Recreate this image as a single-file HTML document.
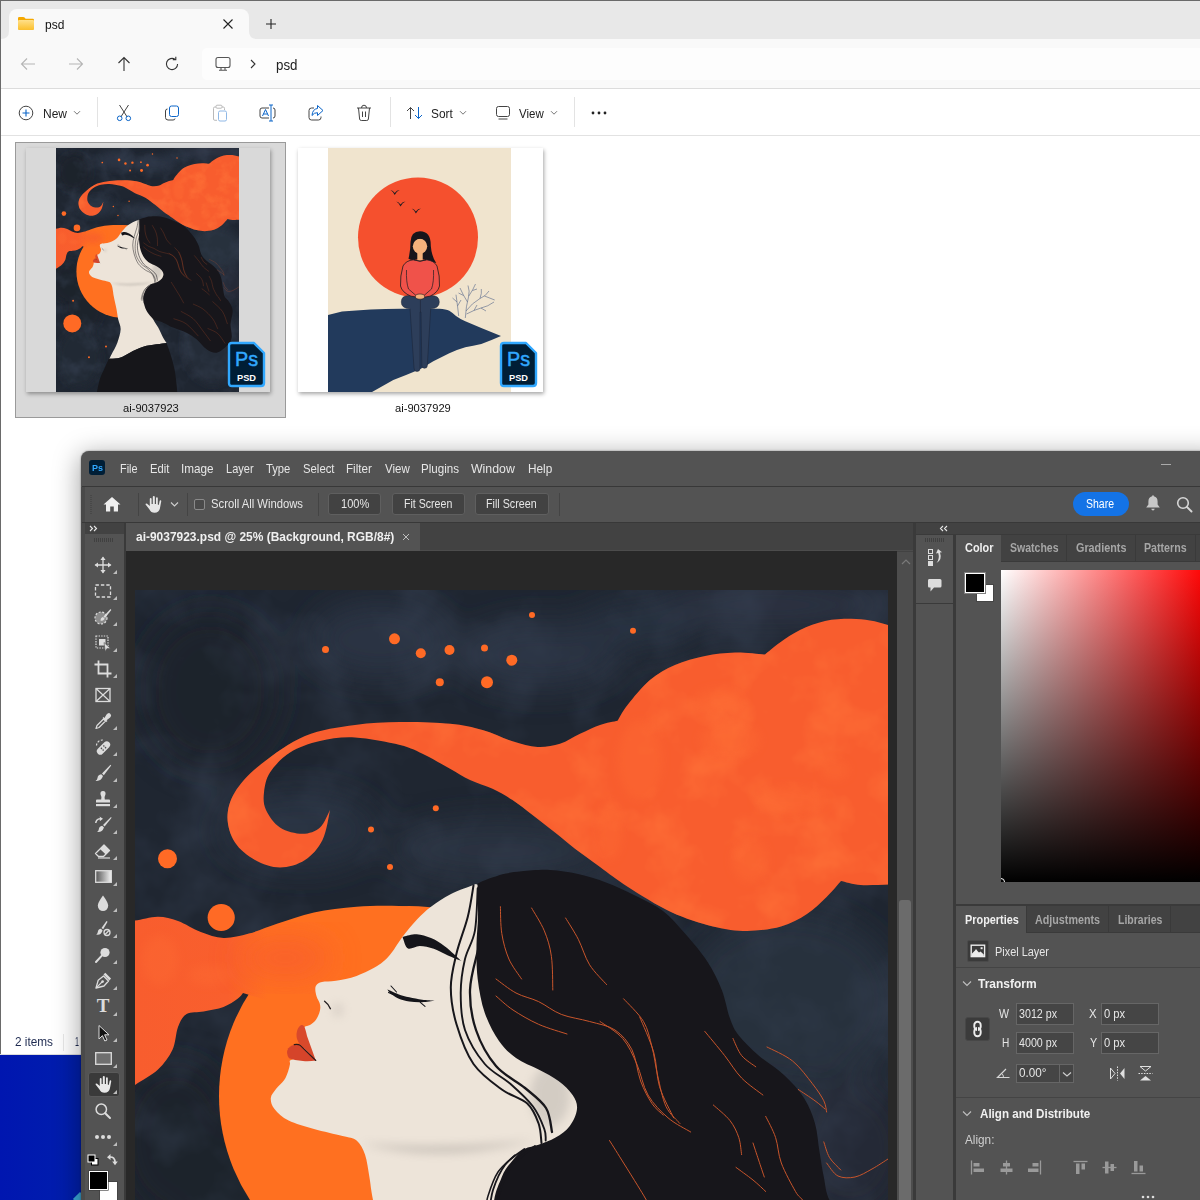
<!DOCTYPE html>
<html><head><meta charset="utf-8"><title>psd</title><style>html,body{margin:0;padding:0;background:#fff;}
#root{position:relative;width:1200px;height:1200px;overflow:hidden;font-family:"Liberation Sans",sans-serif;}
.t{position:absolute;white-space:nowrap;transform-origin:0 50%;}
svg{overflow:visible;display:block}</style></head><body><div id="root">
<div style="position:absolute;left:0;top:1055px;width:90px;height:145px;background:linear-gradient(90deg,#0016b0,#001cae 60%,#0020a8);"></div>
<div style="position:absolute;left:75px;top:1194px;width:10px;height:10px;background:#3aa7d6;transform:rotate(45deg);"></div>
<div style="position:absolute;left:0;top:0;width:1200px;height:1055px;background:#fff;"></div>
<div style="position:absolute;left:1px;top:1px;width:1199px;height:38px;background:#e8e8e8;"></div>
<div style="position:absolute;left:9px;top:9px;width:240px;height:30px;background:#f9f9f9;border-radius:8px 8px 0 0;"></div>
<svg style="position:absolute;left:1px;top:31px" width="260" height="8"><path d="M0,8 Q8,8 8,0 V8Z M248,0 Q248,8 256,8 H248Z" fill="#f9f9f9"/></svg>
<div style="position:absolute;left:1px;top:39px;width:1199px;height:49px;background:#f9f9f9;"></div>
<div style="position:absolute;left:1px;top:88px;width:1199px;height:1px;background:#dcdcdc;"></div>
<div style="position:absolute;left:202px;top:48px;width:1010px;height:32px;background:#fdfdfd;border-radius:5px;"></div>
<div style="position:absolute;left:1px;top:135px;width:1199px;height:1px;background:#e2e2e2;"></div>
<div style="position:absolute;left:0;top:0;width:1200px;height:1px;background:#6a6a6a;"></div>
<div style="position:absolute;left:0;top:0;width:1px;height:1055px;background:#6a6a6a;"></div>
<div style="position:absolute;left:0;top:1054px;width:90px;height:1px;background:#dcdcdc;"></div>
<svg style="position:absolute;left:17px;top:16px" width="18" height="15" viewBox="0 0 18 15">
<defs><linearGradient id="fg1" x1="0" y1="0" x2="0" y2="1"><stop offset="0" stop-color="#ffe08a"/><stop offset="1" stop-color="#fbc02d"/></linearGradient></defs>
<path d="M1,2.2 Q1,1 2.2,1 H6.2 Q7,1 7.6,1.6 L8.6,2.8 H15.8 Q17,2.8 17,4 V12.6 Q17,13.8 15.8,13.8 H2.2 Q1,13.8 1,12.6Z" fill="#f5a800"/>
<path d="M1,5 Q1,4 2.2,4 H15.8 Q17,4 17,5 V12.6 Q17,13.8 15.8,13.8 H2.2 Q1,13.8 1,12.6Z" fill="url(#fg1)"/></svg>
<div class="t" style="left:44.50px;top:15.50px;height:18px;line-height:18px;font-size:12.50px;color:#111;transform:scaleX(0.9576);">psd</div>
<svg style="position:absolute;left:222px;top:18px" width="12" height="12"><path d="M1.5,1.5 L10.5,10.5 M10.5,1.5 L1.5,10.5" stroke="#222" stroke-width="1.1" fill="none"/></svg>
<svg style="position:absolute;left:265px;top:18px" width="12" height="12"><path d="M6,1 V11 M1,6 H11" stroke="#222" stroke-width="1.1" fill="none"/></svg>
<svg style="position:absolute;left:20px;top:57px" width="16" height="14"><path d="M15,7 H1.5 M7,1.5 L1.5,7 L7,12.5" stroke="#b5b5b5" stroke-width="1.1" fill="none"/></svg>
<svg style="position:absolute;left:68px;top:57px" width="16" height="14"><path d="M1,7 H14.5 M9,1.5 L14.5,7 L9,12.5" stroke="#b5b5b5" stroke-width="1.1" fill="none"/></svg>
<svg style="position:absolute;left:117px;top:56px" width="14" height="16"><path d="M7,15 V1.5 M1.5,7 L7,1.5 L12.5,7" stroke="#333" stroke-width="1.1" fill="none"/></svg>
<svg style="position:absolute;left:164px;top:56px" width="16" height="16"><path d="M13.6,8 A5.6,5.6 0 1 1 11.2,3.4" stroke="#333" stroke-width="1.1" fill="none"/><path d="M8.8,3.6 H11.8 V0.8" stroke="#333" stroke-width="1.1" fill="none"/></svg>
<svg style="position:absolute;left:215px;top:56px" width="16" height="16"><rect x="1" y="1.5" width="14" height="10" rx="2" stroke="#555" stroke-width="1.1" fill="none"/><path d="M6,11.5 V14 M10,11.5 V14 M4,14.3 H12" stroke="#555" stroke-width="1.1" fill="none"/></svg>
<svg style="position:absolute;left:249px;top:59px" width="8" height="10"><path d="M2,1 L6,5 L2,9" stroke="#333" stroke-width="1.1" fill="none"/></svg>
<div class="t" style="left:275.50px;top:55.00px;height:20px;line-height:20px;font-size:14.00px;color:#222;transform:scaleX(0.9525);">psd</div>
<svg style="position:absolute;left:18px;top:105px" width="16" height="16"><circle cx="8" cy="8" r="6.8" stroke="#444" stroke-width="1" fill="none"/><path d="M8,4.5 V11.5 M4.5,8 H11.5" stroke="#0a64c8" stroke-width="1.1"/></svg>
<div class="t" style="left:43.00px;top:104.50px;height:18px;line-height:18px;font-size:12.50px;color:#222;transform:scaleX(0.9597);">New</div>
<svg style="position:absolute;left:73px;top:110px" width="8" height="6"><path d="M1,1.2 L4,4.2 L7,1.2" stroke="#777" stroke-width="1" fill="none"/></svg>
<div style="position:absolute;left:97px;top:97px;width:1px;height:30px;background:#e3e3e3;"></div>
<svg style="position:absolute;left:116px;top:104px" width="16" height="18"><path d="M3.5,1 L11.2,13 M12.5,1 L4.8,13" stroke="#444" stroke-width="1" fill="none"/><circle cx="3.7" cy="14.3" r="2.3" stroke="#0a64c8" stroke-width="1" fill="none"/><circle cx="12.3" cy="14.3" r="2.3" stroke="#0a64c8" stroke-width="1" fill="none"/></svg>
<svg style="position:absolute;left:164px;top:105px" width="16" height="16"><rect x="5.5" y="1" width="9" height="10.5" rx="2" stroke="#0a64c8" stroke-width="1" fill="none"/><path d="M3.5,4 Q1.5,4 1.5,6 V12.5 Q1.5,15 4,15 H9 Q11,15 11,13.5" stroke="#444" stroke-width="1" fill="none"/></svg>
<svg style="position:absolute;left:212px;top:104px" width="16" height="18" opacity=".45"><path d="M4,3 H2.8 Q1.5,3 1.5,4.3 V15 Q1.5,16.3 2.8,16.3 H5 M10,3 H11.2 Q12.5,3 12.5,4.3 V6" stroke="#666" stroke-width="1" fill="none"/><rect x="4" y="1.2" width="6" height="3" rx="1" stroke="#666" stroke-width="1" fill="none"/><rect x="6.5" y="7" width="8" height="10" rx="1.5" stroke="#0a64c8" stroke-width="1" fill="none"/></svg>
<svg style="position:absolute;left:258px;top:104px" width="19" height="18"><path d="M11,4 H4 Q2,4 2,6 V12 Q2,14 4,14 H11 M15,4 Q17,4 17,6 V12 Q17,14 15,14" stroke="#444" stroke-width="1" fill="none"/><path d="M13,1 V17 M11,1 H15 M11,17 H15" stroke="#0a64c8" stroke-width="1" fill="none"/><path d="M4.5,12 L7.5,5.5 L10.5,12 M5.5,10 H9.5" stroke="#0a64c8" stroke-width="1" fill="none"/></svg>
<svg style="position:absolute;left:307px;top:104px" width="18" height="18"><path d="M7,4 H4.5 Q2,4 2,6.5 V13.5 Q2,16 4.5,16 H11.5 Q14,16 14,13.5 V12.5" stroke="#444" stroke-width="1" fill="none"/><path d="M10.5,1.5 L16,6.5 L10.5,11.5 V8.7 Q7,8.5 5,11.5 Q5.5,5 10.5,4.5Z" stroke="#0a64c8" stroke-width="1" fill="none" stroke-linejoin="round"/></svg>
<svg style="position:absolute;left:356px;top:104px" width="16" height="18"><path d="M1,4 H15 M5.5,4 Q5.5,1.2 8,1.2 Q10.5,1.2 10.5,4 M2.5,4 L3.6,15 Q3.8,16.5 5.3,16.5 H10.7 Q12.2,16.5 12.4,15 L13.5,4 M6.5,7.5 V13 M9.5,7.5 V13" stroke="#444" stroke-width="1" fill="none"/></svg>
<div style="position:absolute;left:390px;top:97px;width:1px;height:30px;background:#e3e3e3;"></div>
<svg style="position:absolute;left:406px;top:106px" width="18" height="14"><path d="M4.5,13 V1.5 M1,5 L4.5,1.5 L8,5" stroke="#444" stroke-width="1" fill="none"/><path d="M12.5,1 V12.5 M9,9 L12.5,12.5 L16,9" stroke="#0a64c8" stroke-width="1" fill="none"/></svg>
<div class="t" style="left:431.20px;top:104.50px;height:18px;line-height:18px;font-size:12.50px;color:#222;transform:scaleX(0.9509);">Sort</div>
<svg style="position:absolute;left:459px;top:110px" width="8" height="6"><path d="M1,1.2 L4,4.2 L7,1.2" stroke="#777" stroke-width="1" fill="none"/></svg>
<svg style="position:absolute;left:495px;top:105px" width="16" height="16"><rect x="1.5" y="1.5" width="13" height="10" rx="2" stroke="#444" stroke-width="1" fill="none"/><path d="M3.5,14 H12.5" stroke="#444" stroke-width="1"/></svg>
<div class="t" style="left:519.30px;top:104.50px;height:18px;line-height:18px;font-size:12.50px;color:#222;transform:scaleX(0.9193);">View</div>
<svg style="position:absolute;left:550px;top:110px" width="8" height="6"><path d="M1,1.2 L4,4.2 L7,1.2" stroke="#777" stroke-width="1" fill="none"/></svg>
<div style="position:absolute;left:574px;top:97px;width:1px;height:30px;background:#e3e3e3;"></div>
<svg style="position:absolute;left:590px;top:110px" width="18" height="6"><circle cx="3" cy="3" r="1.4" fill="#222"/><circle cx="9" cy="3" r="1.4" fill="#222"/><circle cx="15" cy="3" r="1.4" fill="#222"/></svg>
<div style="position:absolute;left:15px;top:142px;width:271px;height:276px;background:#d9d9d9;border:1px solid #9a9a9a;box-sizing:border-box;"></div>
<div style="position:absolute;left:26px;top:148px;width:244px;height:244px;background:#d9d9d9;box-shadow:1px 2px 4px rgba(0,0,0,.35);"></div>
<div style="position:absolute;left:298px;top:148px;width:245px;height:244px;background:#fff;box-shadow:1px 2px 4px rgba(0,0,0,.35);"></div>
<div class="t" style="left:123.00px;top:399.50px;height:16px;line-height:16px;font-size:11.50px;color:#111;transform:scaleX(0.9695);">ai-9037923</div>
<div class="t" style="left:395.00px;top:399.50px;height:16px;line-height:16px;font-size:11.50px;color:#111;transform:scaleX(0.9695);">ai-9037929</div>
<div class="t" style="left:15.00px;top:1034.00px;height:17px;line-height:17px;font-size:12.00px;color:#1e2a50;transform:scaleX(0.9825);">2 items</div>
<div style="position:absolute;left:63px;top:1034px;width:1px;height:17px;background:#e8e8e8;"></div>
<div class="t" style="left:74.50px;top:1034.00px;height:17px;line-height:17px;font-size:12.00px;color:#1e2a50;transform:scaleX(0.5993);">1</div>
<svg width="0" height="0" style="position:absolute"><defs><filter id="blur18" x="-50%" y="-50%" width="200%" height="200%"><feGaussianBlur stdDeviation="16"/></filter><filter id="blur6" x="-50%" y="-50%" width="200%" height="200%"><feGaussianBlur stdDeviation="5"/></filter><filter id="texbg" x="0" y="0" width="100%" height="100%" color-interpolation-filters="sRGB"><feTurbulence type="fractalNoise" baseFrequency=".013" numOctaves="4" seed="7"/><feColorMatrix type="matrix" values="0 0 0 0 0.21  0 0 0 0 0.25  0 0 0 0 0.32  1.4 0 0 0 -0.62"/></filter><filter id="texor" x="0" y="0" width="100%" height="100%" color-interpolation-filters="sRGB"><feTurbulence type="fractalNoise" baseFrequency=".02" numOctaves="4" seed="11"/><feColorMatrix type="matrix" values="0 0 0 0 1  0 0 0 0 0.45  0 0 0 0 0.22  1.6 0 0 0 -0.72"/></filter><linearGradient id="blobg" gradientUnits="userSpaceOnUse" x1="135" y1="0" x2="400" y2="0"><stop offset="0" stop-color="#f85d2e"/><stop offset=".35" stop-color="#f95f2d"/><stop offset=".5" stop-color="#ff7020"/><stop offset="1" stop-color="#ff7020"/></linearGradient><symbol id="art" viewBox="135 590 753 1000" preserveAspectRatio="none">
<rect x="135" y="590" width="753" height="1000" fill="#1f2631"/>
<g filter="url(#blur18)" opacity=".75">
<ellipse cx="380" cy="640" rx="70" ry="40" fill="#2e3848"/>
<ellipse cx="300" cy="830" rx="80" ry="40" fill="#2c3544"/>
<ellipse cx="540" cy="655" rx="80" ry="35" fill="#2f3949"/>
<ellipse cx="500" cy="850" rx="110" ry="30" fill="#2d3747"/>
<ellipse cx="770" cy="605" rx="120" ry="22" fill="#30394a"/>
<ellipse cx="640" cy="625" rx="60" ry="25" fill="#2c3545"/>
<ellipse cx="790" cy="1000" rx="110" ry="90" fill="#2c3543"/>
<ellipse cx="850" cy="1150" rx="60" ry="70" fill="#252c39"/>
<ellipse cx="210" cy="690" rx="70" ry="80" fill="#1c222c"/>
<ellipse cx="175" cy="1140" rx="60" ry="80" fill="#1b212b"/>
<ellipse cx="250" cy="1230" rx="80" ry="120" fill="#1c222c"/>
<ellipse cx="780" cy="1400" rx="120" ry="160" fill="#262d3a"/>
<ellipse cx="230" cy="1450" rx="90" ry="120" fill="#222936"/>
</g>
<rect x="135" y="590" width="753" height="1000" filter="url(#texbg)"/>
<circle cx="167.5" cy="858.8" r="9.5" fill="#ff6a25"/>
<circle cx="325.5" cy="649.5" r="3.5" fill="#ff6a25"/>
<circle cx="394.5" cy="638.8" r="5.5" fill="#ff6a25"/>
<circle cx="420.8" cy="653.2" r="5.0" fill="#ff6a25"/>
<circle cx="371.0" cy="829.5" r="3.0" fill="#ff6a25"/>
<circle cx="390.0" cy="867.0" r="3.0" fill="#ff6a25"/>
<circle cx="532.0" cy="615.0" r="3.0" fill="#ff6a25"/>
<circle cx="633.0" cy="630.8" r="3.0" fill="#ff6a25"/>
<circle cx="449.5" cy="650.0" r="5.0" fill="#ff6a25"/>
<circle cx="484.5" cy="648.0" r="3.5" fill="#ff6a25"/>
<circle cx="511.8" cy="660.2" r="5.5" fill="#ff6a25"/>
<circle cx="439.8" cy="682.2" r="4.0" fill="#ff6a25"/>
<circle cx="487.0" cy="682.2" r="6.0" fill="#ff6a25"/>
<circle cx="435.8" cy="808.2" r="3.0" fill="#ff6a25"/>
<circle cx="221.2" cy="917.5" r="13.6" fill="#ff6a25"/>
<circle cx="202.0" cy="1309.0" r="37.0" fill="#ff6a25"/>
<circle cx="205.4" cy="1216.0" r="4.0" fill="#ff6a25"/>
<circle cx="340.7" cy="1403.8" r="4.0" fill="#ff6a25"/>
<circle cx="270.6" cy="1447.7" r="4.0" fill="#ff6a25"/>
<circle cx="409" cy="1096" r="190" fill="#ff7020"/>
<path d="M120.0,921.0C122.5,920.9 128.7,921.2 135.0,920.5C141.3,919.8 150.8,916.6 158.0,916.7C165.2,916.8 170.9,918.5 178.0,921.0C185.1,923.5 193.2,929.2 200.8,932.0C208.4,934.8 215.5,937.7 223.5,938.0C231.5,938.3 240.1,936.0 249.0,933.6C257.9,931.2 266.2,927.2 277.0,923.7C287.8,920.2 300.7,915.2 314.0,912.4C327.3,909.6 342.4,907.8 356.6,906.7C370.8,905.6 386.8,905.5 399.0,906.0C411.2,906.5 424.8,909.3 430.0,910.0L430,960 L300,1010 L243,993C242.1,994.0 240.8,996.5 237.6,998.8C234.3,1001.1 229.2,1004.9 223.5,1007.0C217.8,1009.1 209.8,1010.3 203.6,1011.5C197.4,1012.7 190.9,1011.4 186.6,1014.0C182.3,1016.6 180.3,1021.0 178.0,1027.0C175.7,1033.0 175.8,1042.7 172.5,1049.8C169.2,1056.9 164.2,1063.7 158.0,1069.6C151.8,1075.5 141.3,1080.8 135.0,1085.0C128.7,1089.2 122.5,1093.3 120.0,1095.0Z" fill="url(#blobg)"/>
<clipPath id="blobclip"><path d="M120.0,921.0C122.5,920.9 128.7,921.2 135.0,920.5C141.3,919.8 150.8,916.6 158.0,916.7C165.2,916.8 170.9,918.5 178.0,921.0C185.1,923.5 193.2,929.2 200.8,932.0C208.4,934.8 215.5,937.7 223.5,938.0C231.5,938.3 240.1,936.0 249.0,933.6C257.9,931.2 266.2,927.2 277.0,923.7C287.8,920.2 300.7,915.2 314.0,912.4C327.3,909.6 342.4,907.8 356.6,906.7C370.8,905.6 386.8,905.5 399.0,906.0C411.2,906.5 424.8,909.3 430.0,910.0L430,960 L300,1010 L243,993C242.1,994.0 240.8,996.5 237.6,998.8C234.3,1001.1 229.2,1004.9 223.5,1007.0C217.8,1009.1 209.8,1010.3 203.6,1011.5C197.4,1012.7 190.9,1011.4 186.6,1014.0C182.3,1016.6 180.3,1021.0 178.0,1027.0C175.7,1033.0 175.8,1042.7 172.5,1049.8C169.2,1056.9 164.2,1063.7 158.0,1069.6C151.8,1075.5 141.3,1080.8 135.0,1085.0C128.7,1089.2 122.5,1093.3 120.0,1095.0Z"/><circle cx="409" cy="1096" r="190"/></clipPath>
<g clip-path="url(#blobclip)"><g filter="url(#blur18)" opacity=".9"><ellipse cx="285" cy="958" rx="46" ry="18" fill="#f85d2e"/></g></g>
<path d="M330.0,810.0C328.8,815.0 326.7,831.7 322.5,840.0C318.3,848.3 312.1,855.4 305.0,860.0C297.9,864.6 288.3,867.5 280.0,867.5C271.7,867.5 262.5,864.2 255.0,860.0C247.5,855.8 239.6,849.6 235.0,842.5C230.4,835.4 227.5,825.9 227.5,817.5C227.5,809.1 229.6,800.8 235.0,792.0C240.4,783.2 248.3,774.3 260.0,765.0C271.7,755.7 289.2,742.7 305.0,736.0C320.8,729.3 339.2,727.3 355.0,725.0C370.8,722.7 384.2,722.2 400.0,722.0C415.8,721.8 436.2,722.5 450.0,723.8C463.8,725.1 472.1,727.1 482.5,730.0C492.9,732.9 503.3,738.4 512.5,741.2C521.7,744.0 529.6,746.6 537.5,747.0C545.4,747.4 552.9,746.0 560.0,743.8C567.1,741.6 573.3,736.9 580.0,733.8C586.7,730.7 593.8,727.2 600.0,725.0C606.2,722.8 614.6,721.5 617.5,720.8C619.2,718.2 622.1,711.8 627.5,705.0C632.9,698.2 642.1,686.7 650.0,680.0C657.9,673.3 665.8,669.0 675.0,665.0C684.2,661.0 695.0,658.1 705.0,656.0C715.0,653.9 725.0,652.8 735.0,652.5C745.0,652.2 760.0,654.2 765.0,654.5C767.5,652.5 774.2,646.6 780.0,642.5C785.8,638.4 792.5,633.6 800.0,630.0C807.5,626.4 816.7,622.9 825.0,621.0C833.3,619.1 842.5,618.9 850.0,618.8C857.5,618.7 863.7,619.5 870.0,620.5C876.3,621.5 882.2,623.2 888.0,625.0C893.8,626.8 902.2,630.0 905.0,631.0L905.0,884.0C902.2,884.1 895.4,884.3 888.0,884.5C880.6,884.7 868.4,885.6 860.6,885.0C852.8,884.4 844.3,881.7 841.0,881.0C838.6,883.7 832.3,891.5 826.6,897.0C820.9,902.5 814.6,909.1 807.0,914.0C799.4,918.9 791.0,923.7 781.0,926.5C771.0,929.3 758.3,931.0 747.0,931.0C735.7,931.0 725.7,929.7 713.0,926.5C700.3,923.3 685.2,918.6 671.0,912.0C656.8,905.4 639.8,894.5 628.0,887.0C616.2,879.5 608.8,873.4 600.0,867.0C591.2,860.6 582.5,854.5 575.0,848.8C567.5,843.0 562.1,838.1 555.0,832.5C547.9,826.9 539.6,820.4 532.5,815.0C525.4,809.6 519.2,804.4 512.5,800.0C505.8,795.6 499.6,792.1 492.5,788.8C485.4,785.5 477.1,783.3 470.0,780.0C462.9,776.7 457.5,773.0 450.0,768.8C442.5,764.6 433.3,759.0 425.0,755.0C416.7,751.0 411.7,747.9 400.0,745.0C388.3,742.1 368.3,738.2 355.0,737.5C341.7,736.8 330.8,738.5 320.0,741.0C309.2,743.5 298.3,747.2 290.0,752.5C281.7,757.8 274.3,765.8 270.0,772.5C265.7,779.2 264.7,786.2 264.0,792.5C263.3,798.8 263.3,804.2 266.0,810.0C268.7,815.8 273.9,823.5 280.0,827.5C286.1,831.5 295.8,833.8 302.5,833.8C309.2,833.8 315.4,831.5 320.0,827.5C324.6,823.5 328.3,812.9 330.0,810.0Z" fill="#f85d2e"/>
<clipPath id="cloudclip"><path d="M330.0,810.0C328.8,815.0 326.7,831.7 322.5,840.0C318.3,848.3 312.1,855.4 305.0,860.0C297.9,864.6 288.3,867.5 280.0,867.5C271.7,867.5 262.5,864.2 255.0,860.0C247.5,855.8 239.6,849.6 235.0,842.5C230.4,835.4 227.5,825.9 227.5,817.5C227.5,809.1 229.6,800.8 235.0,792.0C240.4,783.2 248.3,774.3 260.0,765.0C271.7,755.7 289.2,742.7 305.0,736.0C320.8,729.3 339.2,727.3 355.0,725.0C370.8,722.7 384.2,722.2 400.0,722.0C415.8,721.8 436.2,722.5 450.0,723.8C463.8,725.1 472.1,727.1 482.5,730.0C492.9,732.9 503.3,738.4 512.5,741.2C521.7,744.0 529.6,746.6 537.5,747.0C545.4,747.4 552.9,746.0 560.0,743.8C567.1,741.6 573.3,736.9 580.0,733.8C586.7,730.7 593.8,727.2 600.0,725.0C606.2,722.8 614.6,721.5 617.5,720.8C619.2,718.2 622.1,711.8 627.5,705.0C632.9,698.2 642.1,686.7 650.0,680.0C657.9,673.3 665.8,669.0 675.0,665.0C684.2,661.0 695.0,658.1 705.0,656.0C715.0,653.9 725.0,652.8 735.0,652.5C745.0,652.2 760.0,654.2 765.0,654.5C767.5,652.5 774.2,646.6 780.0,642.5C785.8,638.4 792.5,633.6 800.0,630.0C807.5,626.4 816.7,622.9 825.0,621.0C833.3,619.1 842.5,618.9 850.0,618.8C857.5,618.7 863.7,619.5 870.0,620.5C876.3,621.5 882.2,623.2 888.0,625.0C893.8,626.8 902.2,630.0 905.0,631.0L905.0,884.0C902.2,884.1 895.4,884.3 888.0,884.5C880.6,884.7 868.4,885.6 860.6,885.0C852.8,884.4 844.3,881.7 841.0,881.0C838.6,883.7 832.3,891.5 826.6,897.0C820.9,902.5 814.6,909.1 807.0,914.0C799.4,918.9 791.0,923.7 781.0,926.5C771.0,929.3 758.3,931.0 747.0,931.0C735.7,931.0 725.7,929.7 713.0,926.5C700.3,923.3 685.2,918.6 671.0,912.0C656.8,905.4 639.8,894.5 628.0,887.0C616.2,879.5 608.8,873.4 600.0,867.0C591.2,860.6 582.5,854.5 575.0,848.8C567.5,843.0 562.1,838.1 555.0,832.5C547.9,826.9 539.6,820.4 532.5,815.0C525.4,809.6 519.2,804.4 512.5,800.0C505.8,795.6 499.6,792.1 492.5,788.8C485.4,785.5 477.1,783.3 470.0,780.0C462.9,776.7 457.5,773.0 450.0,768.8C442.5,764.6 433.3,759.0 425.0,755.0C416.7,751.0 411.7,747.9 400.0,745.0C388.3,742.1 368.3,738.2 355.0,737.5C341.7,736.8 330.8,738.5 320.0,741.0C309.2,743.5 298.3,747.2 290.0,752.5C281.7,757.8 274.3,765.8 270.0,772.5C265.7,779.2 264.7,786.2 264.0,792.5C263.3,798.8 263.3,804.2 266.0,810.0C268.7,815.8 273.9,823.5 280.0,827.5C286.1,831.5 295.8,833.8 302.5,833.8C309.2,833.8 315.4,831.5 320.0,827.5C324.6,823.5 328.3,812.9 330.0,810.0Z"/></clipPath>
<g clip-path="url(#cloudclip)"><rect x="135" y="590" width="753" height="420" filter="url(#texor)"/></g>
<g filter="url(#blur6)" opacity=".3">
<ellipse cx="640" cy="760" rx="22" ry="40" fill="#ff6f35"/>
<ellipse cx="730" cy="740" rx="30" ry="18" fill="#ff6f35"/>
<ellipse cx="790" cy="800" rx="35" ry="14" fill="#ff6f35"/>
<ellipse cx="835" cy="770" rx="14" ry="10" fill="#ff6f35"/>
<ellipse cx="610" cy="830" rx="12" ry="30" fill="#ff6f35"/>
<ellipse cx="750" cy="860" rx="18" ry="22" fill="#ff6f35"/>
<ellipse cx="720" cy="700" rx="25" ry="12" fill="#ff6f35"/>
<ellipse cx="160" cy="960" rx="18" ry="25" fill="#ff6f35"/>
<ellipse cx="210" cy="975" rx="22" ry="10" fill="#ff6f35"/>
</g>
<path d="M476.0,884.0C471.8,885.7 458.5,890.2 451.0,894.0C443.5,897.8 436.7,902.5 431.0,906.7C425.3,911.0 421.7,914.5 417.0,919.5C412.3,924.5 407.0,930.8 402.7,936.5C398.4,942.2 394.9,948.8 391.0,953.5C387.1,958.2 384.7,961.0 379.0,964.8C373.3,968.5 363.8,973.3 356.6,976.0C349.4,978.7 341.8,979.8 336.0,980.8C330.2,981.8 325.2,981.3 322.0,982.0C318.8,982.7 317.6,983.8 316.5,985.0C315.4,986.2 315.3,987.5 315.3,989.5C315.3,991.5 316.0,994.5 316.7,996.7C317.4,999.0 319.0,1001.1 319.6,1003.0C320.2,1004.9 320.4,1006.3 320.3,1008.0C320.2,1009.7 319.9,1011.3 319.2,1013.3C318.4,1015.3 317.3,1018.0 315.8,1020.0C314.3,1022.0 311.9,1023.8 310.0,1025.0C308.1,1026.2 305.8,1025.5 304.6,1027.0C303.4,1028.5 302.8,1031.2 303.0,1034.0C303.2,1036.8 306.3,1041.0 306.0,1044.0C305.7,1047.0 302.7,1049.7 301.0,1052.0C299.3,1054.3 297.8,1056.6 296.0,1058.0C294.2,1059.4 291.0,1059.5 290.0,1060.5C289.0,1061.5 290.3,1062.1 290.0,1064.0C289.7,1065.9 289.0,1069.0 288.0,1071.7C287.0,1074.4 286.2,1077.1 284.2,1080.0C282.2,1082.9 278.2,1086.0 276.0,1089.0C273.8,1092.0 271.1,1094.7 270.8,1098.0C270.6,1101.3 271.5,1105.2 274.5,1109.0C277.5,1112.8 282.0,1117.3 288.6,1120.6C295.2,1123.9 305.0,1126.4 314.0,1129.0C323.0,1131.6 335.4,1134.1 342.5,1136.0C349.6,1137.9 352.9,1137.4 356.6,1140.5C360.4,1143.6 362.9,1148.5 365.0,1154.6C367.1,1160.7 368.1,1169.4 369.4,1177.0C370.7,1184.6 370.6,1187.7 373.0,1200.0C375.4,1212.3 381.0,1235.3 384.0,1250.6C387.0,1265.9 388.0,1278.1 390.8,1291.8C393.6,1305.5 401.6,1317.0 401.0,1333.0C400.4,1349.0 393.7,1370.8 387.4,1388.0C381.1,1405.2 369.0,1424.7 363.3,1436.0C357.6,1447.3 354.7,1452.7 353.0,1456.0C360.4,1455.0 383.4,1454.5 397.7,1450.0C412.0,1445.5 422.9,1436.5 438.9,1429.0C454.9,1421.5 475.5,1410.7 493.8,1405.0C512.1,1399.3 532.7,1397.4 548.7,1394.8C564.7,1392.2 583.1,1390.2 590.0,1389.3C587.7,1385.7 581.7,1378.0 576.0,1367.5C570.3,1357.0 562.4,1338.6 555.6,1326.0C548.8,1313.4 540.9,1304.5 535.0,1291.8C529.1,1279.1 522.5,1265.3 520.0,1250.0C517.5,1234.7 513.3,1216.7 520.0,1200.0C526.7,1183.3 548.3,1165.2 560.0,1150.0C571.7,1134.8 586.7,1125.7 590.0,1109.0C593.3,1092.3 591.7,1071.5 580.0,1050.0C568.3,1028.5 533.3,1005.0 520.0,980.0C506.7,955.0 507.3,916.0 500.0,900.0C492.7,884.0 480.0,886.7 476.0,884.0Z" fill="#ede4d9"/>
<g filter="url(#blur6)" opacity=".3"><ellipse cx="550" cy="1096" rx="20" ry="30" fill="#9a9794"/><ellipse cx="338" cy="1010" rx="5" ry="7" fill="#aaa39c"/><path d="M360,1143 Q440,1165 535,1140 Q440,1150 360,1143Z" fill="#77736f"/></g>
<path d="M353.0,1453.0C360.4,1452.5 383.4,1454.0 397.7,1450.0C412.0,1446.0 422.9,1436.5 438.9,1429.0C454.9,1421.5 475.5,1410.7 493.8,1405.0C512.1,1399.3 532.7,1397.4 548.7,1394.8C564.7,1392.2 583.1,1390.2 590.0,1389.3C593.4,1399.4 604.8,1430.8 610.5,1450.0C616.2,1469.2 620.6,1486.4 624.0,1504.7C627.4,1523.0 629.2,1543.7 631.0,1559.6C632.8,1575.5 634.0,1593.3 634.6,1600.0L301.6,1600.0C303.8,1589.8 309.3,1557.2 315.0,1539.0C320.7,1520.8 329.6,1505.3 335.9,1491.0C342.2,1476.7 350.1,1459.3 353.0,1453.0Z" fill="#16161a"/>
<path d="M477.5,883.5C478.8,883.0 482.4,881.3 485.0,880.3C487.6,879.3 489.5,878.4 493.0,877.3C496.5,876.2 501.2,874.5 506.0,873.5C510.8,872.5 514.3,871.8 521.6,871.2C528.9,870.6 540.6,869.5 550.0,870.0C559.4,870.5 568.6,871.9 578.0,874.0C587.4,876.1 597.1,879.1 606.6,882.7C616.1,886.3 625.6,890.7 635.0,895.4C644.4,900.1 654.7,904.6 663.0,911.0C671.3,917.4 677.6,925.1 685.0,933.6C692.4,942.1 701.5,952.6 707.6,962.0C713.7,971.4 718.1,980.6 721.8,990.0C725.5,999.4 727.2,1011.0 730.0,1018.6C732.8,1026.2 734.0,1029.4 738.8,1035.6C743.6,1041.8 751.1,1048.9 758.6,1055.5C766.1,1062.1 776.4,1067.9 784.0,1075.0C791.6,1082.1 798.8,1089.9 804.0,1098.0C809.2,1106.1 812.4,1114.5 815.0,1123.5C817.6,1132.5 818.0,1142.9 819.5,1151.8C821.0,1160.7 822.1,1169.0 823.8,1177.0C825.5,1185.0 825.5,1192.5 829.5,1200.0C833.5,1207.5 842.6,1212.4 848.0,1222.0C853.4,1231.6 861.2,1242.4 862.0,1257.5C862.8,1272.6 853.7,1294.1 853.0,1312.4C852.3,1330.7 860.5,1352.6 857.8,1367.5C855.1,1382.4 847.3,1391.5 837.0,1401.7C826.7,1412.0 809.7,1426.8 796.0,1429.0C782.3,1431.2 768.5,1424.2 754.8,1415.0C741.1,1405.8 727.4,1385.3 713.6,1374.0C699.8,1362.7 688.1,1355.0 672.0,1347.0C655.9,1339.0 633.0,1332.9 617.0,1326.0C601.0,1319.1 589.7,1311.4 576.0,1305.7C562.3,1300.0 541.8,1294.1 535.0,1291.8C530.4,1286.1 514.5,1271.2 507.6,1257.5C500.7,1243.8 494.8,1222.8 493.8,1209.4C492.8,1196.0 498.6,1185.2 501.8,1177.0C505.0,1168.8 509.2,1164.7 513.0,1160.0C516.8,1155.3 520.2,1151.5 524.5,1149.0C528.8,1146.5 533.4,1146.6 538.6,1144.7C543.8,1142.8 550.4,1140.7 555.6,1137.6C560.8,1134.5 566.2,1130.8 569.8,1126.0C573.4,1121.2 576.5,1114.2 577.0,1109.0C577.5,1103.8 575.7,1099.7 572.6,1095.0C569.5,1090.3 564.2,1085.2 558.5,1081.0C552.8,1076.8 545.7,1073.4 538.6,1069.6C531.5,1065.8 522.6,1062.8 516.0,1058.0C509.4,1053.2 504.2,1048.5 499.0,1041.0C493.8,1033.5 488.4,1023.3 484.8,1013.0C481.2,1002.7 479.1,990.3 477.7,979.0C476.3,967.7 476.4,955.4 476.5,945.0C476.6,934.6 477.8,927.0 478.0,916.7C478.2,906.5 477.6,889.0 477.5,883.5Z" fill="#17161b"/>
<path d="M473.5,885.5C472.6,890.7 470.6,905.4 467.8,916.7C465.0,928.0 459.3,941.7 456.5,953.5C453.7,965.3 450.8,975.7 450.8,987.5C450.8,999.3 452.7,1011.5 456.5,1024.3C460.3,1037.0 465.9,1053.1 473.5,1064.0C481.1,1074.9 492.8,1082.9 501.8,1089.5C510.8,1096.1 521.2,1097.9 527.3,1103.6C533.4,1109.3 536.2,1116.9 538.6,1123.5C541.0,1130.1 541.0,1139.8 541.5,1143.0" fill="none" stroke="#17161b" stroke-width="2" stroke-linecap="round"/>
<path d="M477.7,888.3C477.2,895.4 477.0,919.0 474.9,930.8C472.8,942.6 467.4,948.6 465.0,959.0C462.6,969.4 460.7,981.2 460.7,993.0C460.7,1004.8 461.0,1018.2 465.0,1030.0C469.0,1041.8 477.2,1055.0 484.8,1064.0C492.4,1073.0 502.3,1076.7 510.3,1083.8C518.3,1090.9 527.3,1099.0 533.0,1106.5C538.7,1114.0 542.2,1123.3 544.3,1129.0C546.4,1134.7 545.5,1138.6 545.7,1140.5" fill="none" stroke="#17161b" stroke-width="1.9" stroke-linecap="round"/>
<path d="M478.0,950.0C476.7,956.7 470.3,976.7 470.0,990.0C469.7,1003.3 471.7,1017.3 476.0,1030.0C480.3,1042.7 487.8,1056.3 496.0,1066.0C504.2,1075.7 516.7,1081.0 525.0,1088.0C533.3,1095.0 541.5,1100.7 546.0,1108.0C550.5,1115.3 551.0,1128.0 552.0,1132.0" fill="none" stroke="#17161b" stroke-width="2.3" stroke-linecap="round"/>
<path d="M524.5,1149.0C521.2,1151.7 510.2,1158.2 505.0,1165.0C499.8,1171.8 495.7,1181.7 493.0,1190.0C490.3,1198.3 489.7,1210.8 489.0,1215.0" fill="none" stroke="#17161b" stroke-width="1.8" stroke-linecap="round"/>
<path d="M535.0,1146.0C531.2,1149.3 518.0,1157.8 512.0,1166.0C506.0,1174.2 501.5,1185.2 499.0,1195.0C496.5,1204.8 497.3,1220.0 497.0,1225.0" fill="none" stroke="#17161b" stroke-width="1.8" stroke-linecap="round"/>
<path d="M515.0,1155.0C512.2,1157.8 502.5,1165.2 498.0,1172.0C493.5,1178.8 490.0,1189.7 488.0,1196.0C486.0,1202.3 486.3,1207.7 486.0,1210.0" fill="none" stroke="#17161b" stroke-width="1.5" stroke-linecap="round"/>
<path d="M500.4,906.7C500.6,911.2 500.4,924.9 501.8,933.6C503.2,942.3 505.6,951.4 508.9,959.0C512.2,966.6 519.5,975.7 521.6,979.0" fill="none" stroke="#c8552b" stroke-width="1" stroke-linecap="round"/>
<path d="M531.6,908.0C533.7,911.8 541.0,922.8 544.3,930.8C547.6,938.8 550.0,946.4 551.4,956.3C552.8,966.2 552.6,984.4 552.8,990.0" fill="none" stroke="#c8552b" stroke-width="1" stroke-linecap="round"/>
<path d="M565.6,918.0C567.7,921.5 574.3,931.5 578.3,939.3C582.3,947.1 584.9,957.2 589.6,964.8C594.3,972.3 603.8,981.3 606.6,984.6" fill="none" stroke="#c8552b" stroke-width="1" stroke-linecap="round"/>
<path d="M496.0,979.0C499.3,981.3 508.9,989.2 516.0,993.0C523.1,996.8 531.1,998.0 538.6,1001.6C546.1,1005.2 552.8,1011.1 561.3,1014.4C569.8,1017.7 580.6,1018.9 589.6,1021.5C598.6,1024.1 607.9,1025.3 615.0,1030.0C622.1,1034.7 627.7,1041.3 632.0,1049.8C636.3,1058.3 637.3,1072.0 640.6,1081.0C643.9,1090.0 648.2,1097.9 652.0,1103.6C655.8,1109.3 661.4,1113.1 663.3,1115.0" fill="none" stroke="#c8552b" stroke-width="1" stroke-linecap="round"/>
<path d="M496.0,996.0C498.8,998.3 505.9,1005.3 513.0,1010.0C520.1,1014.7 529.6,1020.3 538.6,1024.3C547.6,1028.3 562.3,1032.4 567.0,1034.0" fill="none" stroke="#c8552b" stroke-width="1" stroke-linecap="round"/>
<path d="M623.6,998.8C626.9,1002.6 638.8,1013.5 643.5,1021.5C648.2,1029.5 649.6,1038.0 652.0,1047.0C654.4,1056.0 655.3,1065.4 657.6,1075.3C659.9,1085.2 662.3,1098.5 666.0,1106.5C669.7,1114.5 677.7,1120.7 680.0,1123.5" fill="none" stroke="#c8552b" stroke-width="1" stroke-linecap="round"/>
<path d="M609.5,1140.5C611.9,1144.2 618.9,1155.5 623.6,1163.0C628.3,1170.5 634.0,1179.6 637.8,1185.8C641.6,1192.0 642.6,1193.5 646.3,1200.0C650.0,1206.5 657.7,1220.8 660.0,1225.0" fill="none" stroke="#c8552b" stroke-width="1" stroke-linecap="round"/>
<path d="M600.0,1021.5C603.8,1024.3 616.6,1031.4 622.7,1038.5C628.8,1045.6 632.6,1054.6 636.8,1064.0C641.0,1073.4 642.8,1086.0 648.0,1095.0C653.2,1104.0 660.9,1111.6 668.0,1117.8C675.1,1124.0 686.9,1129.6 690.7,1132.0" fill="none" stroke="#c8552b" stroke-width="1" stroke-linecap="round"/>
<path d="M639.7,1017.0C642.1,1022.9 650.5,1041.0 653.8,1052.6C657.1,1064.2 656.2,1075.7 659.5,1086.6C662.8,1097.5 671.3,1112.6 673.7,1117.8" fill="none" stroke="#c8552b" stroke-width="1" stroke-linecap="round"/>
<path d="M704.8,1031.4C708.1,1035.4 718.5,1047.7 724.6,1055.5C730.7,1063.3 735.2,1071.4 741.6,1078.0C748.0,1084.6 759.4,1092.2 762.9,1095.0" fill="none" stroke="#c8552b" stroke-width="1" stroke-linecap="round"/>
<path d="M733.0,1038.5C734.4,1041.3 737.8,1050.8 741.6,1055.5C745.4,1060.2 753.4,1064.9 755.8,1066.8" fill="none" stroke="#c8552b" stroke-width="1" stroke-linecap="round"/>
<path d="M767.0,1047.0C771.3,1049.3 785.0,1054.9 792.6,1061.0C800.2,1067.1 807.3,1077.2 812.5,1083.8C817.7,1090.4 821.4,1096.1 823.8,1100.8C826.1,1105.5 826.1,1110.1 826.6,1112.0" fill="none" stroke="#c8552b" stroke-width="1" stroke-linecap="round"/>
<path d="M798.3,1089.5C801.1,1091.4 810.5,1097.5 815.0,1100.8C819.5,1104.0 823.3,1107.6 825.0,1109.0" fill="none" stroke="#c8552b" stroke-width="1" stroke-linecap="round"/>
<path d="M713.3,1105.0C716.1,1107.6 725.8,1115.2 730.0,1120.6C734.2,1126.0 736.9,1131.9 738.8,1137.6C740.7,1143.3 741.1,1151.8 741.6,1154.6" fill="none" stroke="#c8552b" stroke-width="1" stroke-linecap="round"/>
<path d="M765.7,1116.4C767.4,1119.9 773.0,1129.8 775.6,1137.6C778.2,1145.4 778.0,1154.0 781.3,1163.0C784.6,1172.0 792.0,1185.3 795.5,1191.5C799.0,1197.7 799.8,1196.1 802.5,1200.0C805.2,1203.9 810.4,1212.5 812.0,1215.0" fill="none" stroke="#c8552b" stroke-width="1" stroke-linecap="round"/>
<path d="M753.0,1143.0C753.9,1145.8 756.7,1154.3 758.6,1160.0C760.5,1165.7 763.3,1174.2 764.3,1177.0" fill="none" stroke="#c8552b" stroke-width="1" stroke-linecap="round"/>
<path d="M736.0,1167.4C738.8,1169.5 748.0,1176.0 753.0,1180.0C758.0,1184.0 763.6,1189.6 765.7,1191.5" fill="none" stroke="#c8552b" stroke-width="1" stroke-linecap="round"/>
<path d="M823.8,1141.9C824.8,1144.5 826.7,1152.8 829.5,1157.5C832.3,1162.2 838.9,1167.9 840.8,1170.0" fill="none" stroke="#c8552b" stroke-width="1" stroke-linecap="round"/>
<path d="M826.6,1163.0C828.5,1165.2 833.3,1173.7 838.0,1176.0C842.7,1178.3 849.3,1178.2 855.0,1177.0C860.7,1175.8 866.5,1172.0 872.0,1169.0C877.5,1166.0 885.3,1160.7 888.0,1159.0" fill="none" stroke="#c8552b" stroke-width="1" stroke-linecap="round"/>
<path d="M700.0,1230.0C706.7,1233.3 726.7,1240.0 740.0,1250.0C753.3,1260.0 770.0,1276.7 780.0,1290.0C790.0,1303.3 796.7,1323.3 800.0,1330.0" fill="none" stroke="#c8552b" stroke-width="1" stroke-linecap="round"/>
<path d="M650.0,1260.0C658.3,1265.0 685.0,1276.7 700.0,1290.0C715.0,1303.3 728.3,1325.0 740.0,1340.0C751.7,1355.0 765.0,1373.3 770.0,1380.0" fill="none" stroke="#c8552b" stroke-width="1" stroke-linecap="round"/>
<path d="M760.0,1330.0C766.7,1333.3 788.3,1340.0 800.0,1350.0C811.7,1360.0 825.0,1383.3 830.0,1390.0" fill="none" stroke="#c8552b" stroke-width="1" stroke-linecap="round"/>
<path d="M620.0,1290.0C628.3,1293.3 653.3,1298.3 670.0,1310.0C686.7,1321.7 711.7,1351.7 720.0,1360.0" fill="none" stroke="#c8552b" stroke-width="1" stroke-linecap="round"/>
<path d="M780.0,1220.0C786.7,1226.7 810.0,1245.0 820.0,1260.0C830.0,1275.0 836.7,1301.7 840.0,1310.0" fill="none" stroke="#c8552b" stroke-width="1" stroke-linecap="round"/>
<path d="M403.0,938.5C403.2,938.2 401.7,937.2 404.0,936.5C406.3,935.8 412.3,934.0 416.8,934.2C421.3,934.5 426.3,936.0 431.0,938.0C435.7,940.0 439.9,942.6 445.0,946.4C450.1,950.2 458.8,958.6 461.5,961.0C459.2,960.1 452.6,957.5 448.0,955.5C443.4,953.5 438.5,950.4 433.8,948.8C429.1,947.2 424.0,946.0 419.7,946.0C415.4,946.0 410.8,949.8 408.0,948.5C405.2,947.2 403.8,940.2 403.0,938.5Z" fill="#15151a"/>
<path d="M387.3,989.3C389.1,990.1 394.6,992.9 398.3,994.2C402.0,995.5 405.3,996.4 409.3,997.3C413.3,998.2 418.0,999.2 422.2,999.7C426.4,1000.2 432.4,1000.5 434.5,1000.6C432.4,1001.2 426.4,1002.1 422.2,1002.2C418.0,1002.3 413.3,1002.2 409.3,1001.6C405.3,1001.0 401.5,1000.0 398.3,998.6C395.1,997.2 391.8,994.5 390.0,993.0C388.2,991.5 387.8,989.9 387.3,989.3Z" fill="#15151a"/>
<path d="M391,986 L396.5,992 M388.5,992.5 L393,994.5 M420.3,1002.3 L425,1006.3" stroke="#15151a" stroke-width="1.1" stroke-linecap="round"/>
<path d="M324.6,1001.2 Q328.5,1004 330.4,1008.7" stroke="#221d1f" stroke-width="1.4" fill="none" stroke-linecap="round"/>
<path d="M300.8,1025.2 Q297,1028 296.5,1034 Q296.3,1040 299.5,1043.5 L315.8,1060.6 Q311,1047 307,1036 Q305.5,1029 304.2,1026.5 Q302.5,1024.5 300.8,1025.2Z" fill="#d9492b"/>
<path d="M299.5,1043.5 Q292,1044.5 288.3,1048.3 Q285.5,1053 289,1058.2 Q296,1061 305,1061.3 Q311,1061.5 315.8,1060.6Z" fill="#d5442a"/>
<path d="M294.2,1044.6 Q298,1043.8 300.2,1045.4 L315.8,1060.5" stroke="#2a1a1a" stroke-width="1.1" fill="none" stroke-linecap="round"/>
</symbol></defs></svg>
<svg style="position:absolute;left:56px;top:148px" width="183" height="244"><use href="#art" x="0" y="0" width="183" height="244"/></svg>
<svg style="position:absolute;left:227px;top:341px" width="40" height="48" viewBox="0 0 40 48"><path d="M5,2 H27 L37,12 V42 Q37,45 34,45 H5 Q2,45 2,42 V5 Q2,2 5,2Z" fill="#001e36" stroke="#31a8ff" stroke-width="2.4" stroke-linejoin="round"/><text x="19.5" y="25" font-family="Liberation Sans, sans-serif" font-weight="400" font-size="20" fill="#31a8ff" stroke="#31a8ff" stroke-width=".5" text-anchor="middle" textLength="23" lengthAdjust="spacingAndGlyphs">Ps</text><text x="19.5" y="39.5" font-family="Liberation Sans, sans-serif" font-weight="700" font-size="9.5" fill="#ffffff" text-anchor="middle" textLength="19" lengthAdjust="spacingAndGlyphs">PSD</text></svg>
<svg style="position:absolute;left:328px;top:148px;overflow:hidden" width="183" height="244" viewBox="328 148 183 244">
<rect x="328" y="148" width="183" height="244" fill="#f0e4ce"/>
<circle cx="418" cy="237.5" r="60" fill="#f5502e"/>
<path d="M390.5,190.0 q2.5,0.3 4.2,3 q2,-2.8 5,-3 q-3,1.2 -5,5 q-1.5,-3.6 -4.2,-5z" fill="#1c1c22"/>
<path d="M396.3,201.5 q2.5,0.3 4.2,3 q2,-2.8 5,-3 q-3,1.2 -5,5 q-1.5,-3.6 -4.2,-5z" fill="#1c1c22"/>
<path d="M411.7,208.5 q2.5,0.3 4.2,3 q2,-2.8 5,-3 q-3,1.2 -5,5 q-1.5,-3.6 -4.2,-5z" fill="#1c1c22"/>
<path d="M328,315 L342,311.5 Q370,309 401,308.7 L439.3,308.7 Q446,309 449.3,310.7 Q453,313 456,316 Q460,319 465.3,321.3 L481.3,328 L501,336 Q492,340 481.3,344 Q473,346 465.3,347.3 Q456,350 449.3,353.3 L433.3,361.3 L420,369.3 L406.7,374.7 L393.3,380 L372,392 H328Z" fill="#223a5c"/>
<path d="M465.3,318 Q466,306 468.5,297 Q470,291 468,285.5 M467.5,302 Q463,295 460,288 M463.5,295.5 L458.5,293 M468.8,296 Q473,290 475.5,284 M472.5,290.5 L477,289 M466,311 Q472,303 480,298.5 Q486,296 489,291 M480,298.5 Q482,293 481.3,289 M484.5,296 L494.7,300 M458.7,316 Q457.5,305 456,294.7 M457,302 L452.5,298 M457.5,306 L461,300 M466.5,314 Q474,310 481,308 Q488,306.5 494,302 M481,308 L486,311 M474,310.5 L477,305" stroke="#56678a" stroke-width=".6" fill="none"/>
<path d="M420,231.3 Q411,231.3 410.5,242 Q410.5,250 408.5,258.7 Q412,261 416,259.5 L424,259.5 Q430,262 436.2,263 Q431.5,256 430.8,246 Q431,231.3 420,231.3Z" fill="#17151b"/>
<ellipse cx="420" cy="246.2" rx="7.2" ry="7.5" fill="#f4b27c"/>
<path d="M412.6,244.5 Q414.5,238.6 420.5,238.6 Q426,238.8 427.4,244.5 Q428.5,234.5 420,234.5 Q411.5,234.5 412.6,244.5Z" fill="#17151b"/>
<rect x="417.3" y="252.5" width="5.4" height="8" fill="#f4b27c"/>
<path d="M401.3,302 Q401.3,295.6 409,295.6 L431.6,295.6 Q439.3,295.6 439.3,302 Q439.3,308.4 430.7,308.7 L427.3,366 Q427.2,368.3 424.5,368.3 Q421.8,368.3 421.8,365.5 L421,312 L420,312 L420,368.5 Q420,371.5 417,371.5 Q414,371.5 414,368 L410,308.7 Q401.3,308.4 401.3,302Z" fill="#2d3e5a" stroke="#1a2234" stroke-width=".5"/>
<path d="M420.4,300 L420.4,312" stroke="#1c2436" stroke-width=".6"/>
<path d="M413.5,259.8 Q420,262.6 426.5,259.8 Q434,260.5 437,266 Q440,276 439.5,286 Q438,292.5 430,296.2 L421,297.8 L411,296.2 Q402,292.5 400.5,286 Q400,276 403,266 Q406,260.5 413.5,259.8Z" fill="#f0524a" stroke="#1c1c22" stroke-width=".8"/>
<path d="M406.5,270 Q406,282 408.5,289 L416,295.5 M433.5,270 Q434,282 431.5,289 L424,295.5 M413.5,259.8 Q420,262.6 426.5,259.8" stroke="#1c1c22" stroke-width=".7" fill="none"/>
<ellipse cx="420" cy="296.6" rx="4.6" ry="2.6" fill="#f4b27c" stroke="#1c1c22" stroke-width=".6"/>
</svg>
<svg style="position:absolute;left:499px;top:341px" width="40" height="48" viewBox="0 0 40 48"><path d="M5,2 H27 L37,12 V42 Q37,45 34,45 H5 Q2,45 2,42 V5 Q2,2 5,2Z" fill="#001e36" stroke="#31a8ff" stroke-width="2.4" stroke-linejoin="round"/><text x="19.5" y="25" font-family="Liberation Sans, sans-serif" font-weight="400" font-size="20" fill="#31a8ff" stroke="#31a8ff" stroke-width=".5" text-anchor="middle" textLength="23" lengthAdjust="spacingAndGlyphs">Ps</text><text x="19.5" y="39.5" font-family="Liberation Sans, sans-serif" font-weight="700" font-size="9.5" fill="#ffffff" text-anchor="middle" textLength="19" lengthAdjust="spacingAndGlyphs">PSD</text></svg>
<div style="position:absolute;left:81px;top:451px;width:1140px;height:780px;background:#535353;border-radius:8px 0 0 0;box-shadow:0 5px 26px 2px rgba(0,0,0,.34), 0 0 2px rgba(0,0,0,.45);"></div>
<div style="position:absolute;left:81px;top:487px;width:4px;height:720px;background:#4a4a4a;"></div>
<div style="position:absolute;left:82px;top:486px;width:1120px;height:1px;background:#383838;"></div>
<div style="position:absolute;left:82px;top:522px;width:1120px;height:1px;background:#383838;"></div>
<div style="position:absolute;left:89px;top:460px;width:16px;height:15px;background:#001e36;border-radius:3px;"></div>
<div class="t" style="left:91.60px;top:461.00px;height:13px;line-height:13px;font-size:9.50px;color:#31a8ff;font-weight:700;transform:scaleX(0.9466);">Ps</div>
<div class="t" style="left:119.50px;top:459.50px;height:18px;line-height:18px;font-size:13.00px;color:#e6e6e6;transform:scaleX(0.8354);">File</div>
<div class="t" style="left:149.50px;top:459.50px;height:18px;line-height:18px;font-size:13.00px;color:#e6e6e6;transform:scaleX(0.8615);">Edit</div>
<div class="t" style="left:181.20px;top:459.50px;height:18px;line-height:18px;font-size:13.00px;color:#e6e6e6;transform:scaleX(0.9023);">Image</div>
<div class="t" style="left:226.20px;top:459.50px;height:18px;line-height:18px;font-size:13.00px;color:#e6e6e6;transform:scaleX(0.8487);">Layer</div>
<div class="t" style="left:266.20px;top:459.50px;height:18px;line-height:18px;font-size:13.00px;color:#e6e6e6;transform:scaleX(0.8622);">Type</div>
<div class="t" style="left:303.00px;top:459.50px;height:18px;line-height:18px;font-size:13.00px;color:#e6e6e6;transform:scaleX(0.8718);">Select</div>
<div class="t" style="left:346.20px;top:459.50px;height:18px;line-height:18px;font-size:13.00px;color:#e6e6e6;transform:scaleX(0.8931);">Filter</div>
<div class="t" style="left:384.50px;top:459.50px;height:18px;line-height:18px;font-size:13.00px;color:#e6e6e6;transform:scaleX(0.8839);">View</div>
<div class="t" style="left:421.20px;top:459.50px;height:18px;line-height:18px;font-size:13.00px;color:#e6e6e6;transform:scaleX(0.8912);">Plugins</div>
<div class="t" style="left:471.20px;top:459.50px;height:18px;line-height:18px;font-size:13.00px;color:#e6e6e6;transform:scaleX(0.9473);">Window</div>
<div class="t" style="left:527.50px;top:459.50px;height:18px;line-height:18px;font-size:13.00px;color:#e6e6e6;transform:scaleX(0.9088);">Help</div>
<div style="position:absolute;left:1161px;top:464px;width:10px;height:1px;background:#aaa;"></div>
<div style="position:absolute;left:90px;top:495px;width:2px;height:19px;background:repeating-linear-gradient(#484848 0 1px,transparent 1px 2px);"></div>
<svg style="position:absolute;left:103px;top:496px" width="18" height="16"><path d="M9,1 L17.5,8.6 H15 V15.5 H10.8 V10.5 H7.2 V15.5 H3 V8.6 H0.5Z" fill="#efefef"/></svg>
<div style="position:absolute;left:138px;top:493px;width:1px;height:23px;background:#444;"></div>
<svg style="position:absolute;left:144.6px;top:496px" width="17" height="17" viewBox="0 0 17 17"><path d="M0.6,8.6 Q0.2,7.6 1.4,7.6 Q2.2,7.6 3,8.4 L4.8,10 V3 Q4.8,2 5.7,2 Q6.6,2 6.6,3 V8 H7.8 V1 Q7.8,0 8.8,0 Q9.8,0 9.8,1 V8 H11 V2.2 Q11,1.2 11.9,1.2 Q12.8,1.2 12.8,2.2 V8.6 L13.8,9 L14.6,5 Q14.8,4.1 15.6,4.3 Q16.4,4.5 16.2,5.4 L15,12 Q14.2,16.8 9.5,16.8 Q6,16.8 4.3,13.2 Z" fill="#e6e6e6"/></svg>
<svg style="position:absolute;left:170px;top:501px" width="9" height="7"><path d="M1,1.5 L4.5,5 L8,1.5" stroke="#cfcfcf" stroke-width="1.1" fill="none"/></svg>
<div style="position:absolute;left:187px;top:493px;width:1px;height:23px;background:#444;"></div>
<div style="position:absolute;left:194px;top:499px;width:11px;height:11px;box-sizing:border-box;border:1px solid #8a8a8a;border-radius:2px;background:#4a4a4a;"></div>
<div class="t" style="left:211.20px;top:496.30px;height:17px;line-height:17px;font-size:12.00px;color:#e6e6e6;transform:scaleX(0.9385);">Scroll All Windows</div>
<div style="position:absolute;left:318px;top:493px;width:1px;height:23px;background:#444;"></div>
<div style="position:absolute;left:328.0px;top:492.5px;width:52.5px;height:22.5px;box-sizing:border-box;border:1px solid #5f5f5f;border-radius:3px;background:#424242;"></div>
<div class="t" style="left:340.50px;top:496.20px;height:17px;line-height:17px;font-size:12.00px;color:#e6e6e6;transform:scaleX(0.9221);">100%</div>
<div style="position:absolute;left:392.0px;top:492.5px;width:73.0px;height:22.5px;box-sizing:border-box;border:1px solid #5f5f5f;border-radius:3px;background:#424242;"></div>
<div class="t" style="left:404.20px;top:496.20px;height:17px;line-height:17px;font-size:12.00px;color:#e6e6e6;transform:scaleX(0.8832);">Fit Screen</div>
<div style="position:absolute;left:474.5px;top:492.5px;width:74.7px;height:22.5px;box-sizing:border-box;border:1px solid #5f5f5f;border-radius:3px;background:#424242;"></div>
<div class="t" style="left:486.20px;top:496.20px;height:17px;line-height:17px;font-size:12.00px;color:#e6e6e6;transform:scaleX(0.8926);">Fill Screen</div>
<div style="position:absolute;left:559px;top:493px;width:1px;height:23px;background:#444;"></div>
<div style="position:absolute;left:1073px;top:492px;width:56px;height:24px;border-radius:12px;background:#1473e6;"></div>
<div class="t" style="left:1086.20px;top:495.20px;height:18px;line-height:18px;font-size:12.50px;color:#fff;transform:scaleX(0.8394);">Share</div>
<svg style="position:absolute;left:1145px;top:494px" width="16" height="18"><path d="M8,1.2 Q8.9,1.2 8.9,2.3 Q12.6,3.2 12.6,7.5 V10.5 L14.8,13.6 H1.2 L3.4,10.5 V7.5 Q3.4,3.2 7.1,2.3 Q7.1,1.2 8,1.2Z" fill="#c8c8c8"/><path d="M6.3,14.8 H9.7 Q9.5,16.5 8,16.5 Q6.5,16.5 6.3,14.8Z" fill="#c8c8c8"/></svg>
<svg style="position:absolute;left:1176px;top:496px" width="17" height="17"><circle cx="7" cy="7" r="5.3" stroke="#d6d6d6" stroke-width="1.6" fill="none"/><path d="M11,11 L15.5,15.5" stroke="#d6d6d6" stroke-width="1.9" stroke-linecap="round"/></svg>
<div style="position:absolute;left:124px;top:523px;width:792px;height:29px;background:#424242;"></div>
<div style="position:absolute;left:124px;top:523px;width:2px;height:700px;background:#3a3a3a;"></div>
<div style="position:absolute;left:420px;top:550px;width:493px;height:1px;background:#4c4c4c;"></div>
<div style="position:absolute;left:85px;top:523px;width:39px;height:11px;background:#424242;"></div>
<svg style="position:absolute;left:89px;top:525px" width="10" height="7"><path d="M1,1 L3.5,3.5 L1,6 M5,1 L7.5,3.5 L5,6" stroke="#e8e8e8" stroke-width="1.1" fill="none"/></svg>
<div style="position:absolute;left:94px;top:538px;width:19px;height:4px;background:repeating-linear-gradient(90deg,#404040 0 1px,transparent 1px 2px);"></div>
<div style="position:absolute;left:126px;top:523px;width:294px;height:28px;background:#535353;"></div>
<div class="t" style="left:135.50px;top:528.00px;height:18px;line-height:18px;font-size:12.50px;color:#f0f0f0;font-weight:700;transform:scaleX(0.9569);">ai-9037923.psd @ 25% (Background, RGB/8#)</div>
<svg style="position:absolute;left:402px;top:533px" width="8" height="8"><path d="M1,1 L7,7 M7,1 L1,7" stroke="#bdbdbd" stroke-width="1" fill="none"/></svg>
<div style="position:absolute;left:126px;top:551px;width:771px;height:660px;background:#282828;"></div>
<div style="position:absolute;left:897px;top:552px;width:16px;height:660px;background:#4d4d4d;"></div>
<svg style="position:absolute;left:901px;top:558px" width="10" height="8"><path d="M1,6 L5,2 L9,6" stroke="#7a7a7a" stroke-width="1.2" fill="none"/></svg>
<div style="position:absolute;left:899px;top:900px;width:12px;height:320px;background:#6b6b6b;border-radius:3px 3px 0 0;"></div>
<div style="position:absolute;left:913px;top:523px;width:3px;height:700px;background:#3a3a3a;"></div>
<div style="position:absolute;left:916px;top:523px;width:300px;height:11px;background:#424242;"></div>
<svg style="position:absolute;left:939px;top:525px" width="10" height="7"><path d="M4,1 L1.5,3.5 L4,6 M8,1 L5.5,3.5 L8,6" stroke="#e8e8e8" stroke-width="1.1" fill="none"/></svg>
<div style="position:absolute;left:916px;top:534px;width:37px;height:1px;background:#3a3a3a;"></div>
<div style="position:absolute;left:925px;top:538px;width:19px;height:4px;background:repeating-linear-gradient(90deg,#404040 0 1px,transparent 1px 2px);"></div>
<svg style="position:absolute;left:927px;top:548px" width="17" height="20"><rect x="1.5" y="1.5" width="4" height="4" fill="none" stroke="#ddd" stroke-width="1"/><rect x="1.5" y="7.5" width="4" height="4" fill="none" stroke="#ddd" stroke-width="1"/><rect x="1" y="13" width="5" height="5" fill="#ddd"/><path d="M9.5,15 Q15.5,12 13,4.5 L15,4.2 L11,1 L9,5.5 L11.2,5 Q13,10.5 9.5,15Z" fill="#ddd"/></svg>
<svg style="position:absolute;left:927px;top:578px" width="16" height="15"><path d="M2,1 H13 Q14.5,1 14.5,2.5 V8 Q14.5,9.5 13,9.5 H7 L3.5,13.5 V9.5 H2 Q1,9.5 1,8 V2.5 Q1,1 2,1Z" fill="#ddd"/></svg>
<div style="position:absolute;left:916px;top:603px;width:37px;height:1px;background:#3a3a3a;"></div>
<div style="position:absolute;left:953px;top:534px;width:3px;height:700px;background:#3a3a3a;"></div>
<div style="position:absolute;left:956px;top:534px;width:260px;height:1px;background:#3a3a3a;"></div>
<div style="position:absolute;left:1001px;top:535px;width:215px;height:27px;background:#424242;border-bottom:1px solid #3a3a3a;box-sizing:border-box;"></div>
<div style="position:absolute;left:1066.0px;top:535px;width:1px;height:27px;background:#3a3a3a;"></div>
<div style="position:absolute;left:1134.5px;top:535px;width:1px;height:27px;background:#3a3a3a;"></div>
<div style="position:absolute;left:1195.0px;top:535px;width:1px;height:27px;background:#3a3a3a;"></div>
<div class="t" style="left:964.50px;top:539.00px;height:18px;line-height:18px;font-size:12.50px;color:#f0f0f0;font-weight:700;transform:scaleX(0.8733);">Color</div>
<div class="t" style="left:1009.50px;top:539.00px;height:18px;line-height:18px;font-size:12.50px;color:#a6a6a6;font-weight:700;transform:scaleX(0.8410);">Swatches</div>
<div class="t" style="left:1075.80px;top:539.00px;height:18px;line-height:18px;font-size:12.50px;color:#a6a6a6;font-weight:700;transform:scaleX(0.8637);">Gradients</div>
<div class="t" style="left:1144.20px;top:539.00px;height:18px;line-height:18px;font-size:12.50px;color:#a6a6a6;font-weight:700;transform:scaleX(0.8517);">Patterns</div>
<div style="position:absolute;left:1001px;top:570px;width:206px;height:312px;overflow:hidden;background:linear-gradient(to top,#000,rgba(0,0,0,0)),linear-gradient(to right,#fff,#f00);"><div style="position:absolute;left:-4px;top:308px;width:8px;height:8px;border:1px solid #fff;border-radius:50%;box-sizing:border-box;"></div></div>
<div style="position:absolute;left:975.7px;top:583.7px;width:18.7px;height:18.3px;background:#fff;border:1px solid #454545;box-sizing:border-box;"></div>
<div style="position:absolute;left:965.3px;top:573.3px;width:20px;height:19.6px;background:#000;border:1.4px solid #fff;box-shadow:0 0 0 1px #808080;box-sizing:border-box;"></div>
<div style="position:absolute;left:956px;top:903.5px;width:260px;height:29.5px;background:#424242;border-top:2px solid #3a3a3a;border-bottom:1px solid #3a3a3a;box-sizing:border-box;"></div>
<div style="position:absolute;left:956px;top:906px;width:70px;height:27px;background:#535353;"></div>
<div style="position:absolute;left:1026.0px;top:906px;width:1px;height:26px;background:#3a3a3a;"></div>
<div style="position:absolute;left:1108.0px;top:906px;width:1px;height:26px;background:#3a3a3a;"></div>
<div style="position:absolute;left:1170.0px;top:906px;width:1px;height:26px;background:#3a3a3a;"></div>
<div class="t" style="left:965.00px;top:910.60px;height:18px;line-height:18px;font-size:12.50px;color:#f0f0f0;font-weight:700;transform:scaleX(0.8701);">Properties</div>
<div class="t" style="left:1035.20px;top:910.60px;height:18px;line-height:18px;font-size:12.50px;color:#a6a6a6;font-weight:700;transform:scaleX(0.8586);">Adjustments</div>
<div class="t" style="left:1118.00px;top:910.60px;height:18px;line-height:18px;font-size:12.50px;color:#a6a6a6;font-weight:700;transform:scaleX(0.8390);">Libraries</div>
<div style="position:absolute;left:966.5px;top:940px;width:22px;height:22px;box-sizing:border-box;border:1px solid #4a4a4a;border-radius:2px;background:#3a3a3a;"></div>
<svg style="position:absolute;left:970px;top:944px" width="16" height="14"><rect x="1.2" y="1.2" width="13.4" height="11.4" fill="#3a3a3a" stroke="#ececec" stroke-width="1.4"/><path d="M2,12 V9.5 L5,6.5 L6,5 L7.5,7 L9,8.5 L10.5,7.5 L13.8,10.5 V12Z" fill="#ececec"/><rect x="10.6" y="3.2" width="2" height="2" fill="#ececec"/></svg>
<div class="t" style="left:995.00px;top:943.40px;height:18px;line-height:18px;font-size:12.50px;color:#e6e6e6;transform:scaleX(0.8733);">Pixel Layer</div>
<div style="position:absolute;left:956px;top:967px;width:260px;height:1px;background:#444;"></div>
<svg style="position:absolute;left:962px;top:980px" width="10" height="8"><path d="M1,1.5 L5,5.5 L9,1.5" stroke="#c0c0c0" stroke-width="1.1" fill="none"/></svg>
<div class="t" style="left:978.20px;top:975.00px;height:18px;line-height:18px;font-size:12.50px;color:#f0f0f0;font-weight:700;transform:scaleX(0.9586);">Transform</div>
<div style="position:absolute;box-sizing:border-box;border:1px solid #666;background:#454545;left:1016.2px;top:1003.0px;width:57.5px;height:21.5px;"></div>
<div style="position:absolute;box-sizing:border-box;border:1px solid #666;background:#454545;left:1101.0px;top:1003.0px;width:58.0px;height:21.5px;"></div>
<div style="position:absolute;box-sizing:border-box;border:1px solid #666;background:#454545;left:1016.2px;top:1032.0px;width:57.5px;height:21.5px;"></div>
<div style="position:absolute;box-sizing:border-box;border:1px solid #666;background:#454545;left:1101.0px;top:1032.0px;width:58.0px;height:21.5px;"></div>
<div style="position:absolute;box-sizing:border-box;border:1px solid #666;background:#454545;left:1015.6px;top:1064.0px;width:58.6px;height:19.0px;"></div>
<div class="t" style="left:999.00px;top:1005.50px;height:17px;line-height:17px;font-size:12.00px;color:#e6e6e6;transform:scaleX(0.8829);">W</div>
<div class="t" style="left:1002.00px;top:1034.50px;height:17px;line-height:17px;font-size:12.00px;color:#e6e6e6;transform:scaleX(0.8423);">H</div>
<div class="t" style="left:1089.40px;top:1005.50px;height:17px;line-height:17px;font-size:12.00px;color:#e6e6e6;transform:scaleX(0.9495);">X</div>
<div class="t" style="left:1089.80px;top:1034.50px;height:17px;line-height:17px;font-size:12.00px;color:#e6e6e6;transform:scaleX(0.8995);">Y</div>
<div class="t" style="left:1019.40px;top:1005.50px;height:17px;line-height:17px;font-size:12.00px;color:#e6e6e6;transform:scaleX(0.8898);">3012 px</div>
<div class="t" style="left:1019.40px;top:1034.50px;height:17px;line-height:17px;font-size:12.00px;color:#e6e6e6;transform:scaleX(0.8898);">4000 px</div>
<div class="t" style="left:1104.30px;top:1005.50px;height:17px;line-height:17px;font-size:12.00px;color:#e6e6e6;transform:scaleX(0.9347);">0 px</div>
<div class="t" style="left:1104.30px;top:1034.50px;height:17px;line-height:17px;font-size:12.00px;color:#e6e6e6;transform:scaleX(0.9347);">0 px</div>
<div class="t" style="left:1018.80px;top:1065.10px;height:17px;line-height:17px;font-size:12.00px;color:#e6e6e6;transform:scaleX(0.9767);">0.00°</div>
<div style="position:absolute;left:1059px;top:1064px;width:1px;height:19px;background:#666;"></div>
<svg style="position:absolute;left:1062px;top:1071px" width="10" height="7"><path d="M1,1.5 L5,5 L9,1.5" stroke="#d0d0d0" stroke-width="1.1" fill="none"/></svg>
<div style="position:absolute;left:965px;top:1016.5px;width:24.5px;height:24.5px;box-sizing:border-box;background:#3b3b3b;border:1px solid #474747;border-radius:3px;"></div>
<svg style="position:absolute;left:971.5px;top:1020px" width="11" height="18"><rect x="2.3" y="1.8" width="6.4" height="8.2" rx="3.2" fill="none" stroke="#ececec" stroke-width="1.9"/><rect x="2.3" y="8" width="6.4" height="8.2" rx="3.2" fill="none" stroke="#ececec" stroke-width="1.9"/><path d="M5.5,6.5 V11.5" stroke="#3b3b3b" stroke-width="1"/></svg>
<svg style="position:absolute;left:996px;top:1067px" width="15" height="12"><path d="M13.5,10.5 H1.5 L10,2" stroke="#d6d6d6" stroke-width="1.2" fill="none"/><path d="M7.5,10.5 Q7.5,7.5 5.6,6.4" stroke="#d6d6d6" stroke-width="1" fill="none"/></svg>
<svg style="position:absolute;left:1109px;top:1066px" width="17" height="15"><path d="M1.5,2 L6,7.5 L1.5,13Z" fill="none" stroke="#e0e0e0" stroke-width="1"/><path d="M15.5,2 L11,7.5 L15.5,13Z" fill="#e0e0e0"/><path d="M8.5,0.5 V14.5" stroke="#e0e0e0" stroke-width="1" stroke-dasharray="1.5 1.2"/></svg>
<svg style="position:absolute;left:1138px;top:1065px" width="15" height="17"><path d="M2,1.5 L7.5,6 L13,1.5Z" fill="none" stroke="#e0e0e0" stroke-width="1"/><path d="M2,15.5 L7.5,11 L13,15.5Z" fill="#e0e0e0"/><path d="M0.5,8.5 H14.5" stroke="#e0e0e0" stroke-width="1" stroke-dasharray="1.5 1.2"/></svg>
<div style="position:absolute;left:956px;top:1097px;width:260px;height:1px;background:#444;"></div>
<svg style="position:absolute;left:962px;top:1110px" width="10" height="8"><path d="M1,1.5 L5,5.5 L9,1.5" stroke="#c0c0c0" stroke-width="1.1" fill="none"/></svg>
<div class="t" style="left:979.80px;top:1105.00px;height:18px;line-height:18px;font-size:12.50px;color:#f0f0f0;font-weight:700;transform:scaleX(0.9280);">Align and Distribute</div>
<div class="t" style="left:965.00px;top:1132.00px;height:17px;line-height:17px;font-size:12.00px;color:#d0d0d0;transform:scaleX(0.9794);">Align:</div>
<svg style="position:absolute;left:970px;top:1160px" width="15" height="15"><path d="M1.5,0.5 V14.5" stroke="#9a9a9a" stroke-width="1.3"/><rect x="3.5" y="3" width="6" height="3.5" fill="#9a9a9a"/><rect x="3.5" y="8.5" width="10.5" height="3.5" fill="#9a9a9a"/></svg>
<svg style="position:absolute;left:999px;top:1160px" width="15" height="15"><path d="M7.5,0.5 V14.5" stroke="#9a9a9a" stroke-width="1.3"/><rect x="4" y="3" width="7" height="3.5" fill="#9a9a9a"/><rect x="1.5" y="8.5" width="12" height="3.5" fill="#9a9a9a"/></svg>
<svg style="position:absolute;left:1027px;top:1160px" width="15" height="15"><path d="M13.5,0.5 V14.5" stroke="#9a9a9a" stroke-width="1.3"/><rect x="5.5" y="3" width="6" height="3.5" fill="#9a9a9a"/><rect x="1" y="8.5" width="10.5" height="3.5" fill="#9a9a9a"/></svg>
<svg style="position:absolute;left:1073px;top:1160px" width="15" height="15"><path d="M0.5,1.5 H14.5" stroke="#9a9a9a" stroke-width="1.3"/><rect x="3" y="3.5" width="3.5" height="10.5" fill="#9a9a9a"/><rect x="8.5" y="3.5" width="3.5" height="6" fill="#9a9a9a"/></svg>
<svg style="position:absolute;left:1102px;top:1160px" width="15" height="15"><path d="M0.5,7.5 H14.5" stroke="#9a9a9a" stroke-width="1.3"/><rect x="3" y="1.5" width="3.5" height="12" fill="#9a9a9a"/><rect x="8.5" y="4" width="3.5" height="7" fill="#9a9a9a"/></svg>
<svg style="position:absolute;left:1131px;top:1160px" width="15" height="15"><path d="M0.5,13.5 H14.5" stroke="#9a9a9a" stroke-width="1.3"/><rect x="3" y="1" width="3.5" height="10.5" fill="#9a9a9a"/><rect x="8.5" y="5.5" width="3.5" height="6" fill="#9a9a9a"/></svg>
<svg style="position:absolute;left:1141px;top:1194px" width="14" height="6"><circle cx="2" cy="3" r="1.3" fill="#ddd"/><circle cx="7" cy="3" r="1.3" fill="#ddd"/><circle cx="12" cy="3" r="1.3" fill="#ddd"/></svg>
<svg style="position:absolute;left:93px;top:554.5px" width="20" height="20" viewBox="0 0 20 20"><path d="M10,2.5 V17.5 M2.5,10 H17.5" stroke="#dcdcdc" stroke-width="1.3"/><path d="M10,1.5 L12.6,5 H7.4Z M10,18.5 L12.6,15 H7.4Z M1.5,10 L5,7.4 V12.6Z M18.5,10 L15,7.4 V12.6Z" fill="#dcdcdc"/></svg>
<svg style="position:absolute;left:113px;top:569.5px" width="4" height="4"><path d="M4,0 V4 H0Z" fill="#bdbdbd"/></svg>
<svg style="position:absolute;left:93px;top:580.5px" width="20" height="20" viewBox="0 0 20 20"><rect x="2.5" y="4" width="15" height="12" fill="none" stroke="#dcdcdc" stroke-width="1.3" stroke-dasharray="3.4 2"/></svg>
<svg style="position:absolute;left:113px;top:595.5px" width="4" height="4"><path d="M4,0 V4 H0Z" fill="#bdbdbd"/></svg>
<svg style="position:absolute;left:93px;top:606.5px" width="20" height="20" viewBox="0 0 20 20"><circle cx="8" cy="11" r="6" fill="#8c8c8c" stroke="#dcdcdc" stroke-width="1.2" stroke-dasharray="2 1.6"/><path d="M17.5,2 L10.5,9.5 L12,11 L18.3,3Z" fill="#dcdcdc"/><path d="M10,10 Q7.5,10.5 7.6,13.8 Q11,13.8 11.6,11.5Z" fill="#dcdcdc"/></svg>
<svg style="position:absolute;left:113px;top:621.5px" width="4" height="4"><path d="M4,0 V4 H0Z" fill="#bdbdbd"/></svg>
<svg style="position:absolute;left:93px;top:632.5px" width="20" height="20" viewBox="0 0 20 20"><rect x="3" y="3" width="12" height="12" fill="none" stroke="#dcdcdc" stroke-width="1.2" stroke-dasharray="1.4 1.2"/><rect x="6" y="6" width="6.5" height="6.5" fill="#dcdcdc"/><path d="M11,9.5 L17.5,15.5 H14 L12.3,18.5Z" fill="#dcdcdc" stroke="#535353" stroke-width=".6"/></svg>
<svg style="position:absolute;left:113px;top:647.5px" width="4" height="4"><path d="M4,0 V4 H0Z" fill="#bdbdbd"/></svg>
<svg style="position:absolute;left:93px;top:658.5px" width="20" height="20" viewBox="0 0 20 20"><path d="M5.5,1.5 V14.5 H18.5 M1.5,5.5 H14.5 V18.5" stroke="#dcdcdc" stroke-width="1.8" fill="none"/></svg>
<svg style="position:absolute;left:113px;top:673.5px" width="4" height="4"><path d="M4,0 V4 H0Z" fill="#bdbdbd"/></svg>
<svg style="position:absolute;left:93px;top:684.5px" width="20" height="20" viewBox="0 0 20 20"><rect x="3" y="3.5" width="14" height="13" fill="none" stroke="#dcdcdc" stroke-width="1.3"/><path d="M3,3.5 L17,16.5 M17,3.5 L3,16.5" stroke="#dcdcdc" stroke-width="1.2"/></svg>
<svg style="position:absolute;left:93px;top:710.5px" width="20" height="20" viewBox="0 0 20 20"><path d="M3,17.5 L4,14.5 L10.5,8 L12.5,10 L6,16.5Z" fill="none" stroke="#dcdcdc" stroke-width="1.2" stroke-linejoin="round"/><path d="M10,6.5 L14,10.5 M11.5,8 L14.2,3.6 Q15.7,2 17,3.3 Q18.2,4.6 16.7,6 L12.7,9.2Z" fill="#dcdcdc" stroke="#dcdcdc" stroke-width="1.2"/></svg>
<svg style="position:absolute;left:113px;top:725.5px" width="4" height="4"><path d="M4,0 V4 H0Z" fill="#bdbdbd"/></svg>
<svg style="position:absolute;left:93px;top:736.5px" width="20" height="20" viewBox="0 0 20 20"><path d="M3.5,8.5 A6,6 0 0 1 10,3" fill="none" stroke="#dcdcdc" stroke-width="1.2" stroke-dasharray="2 1.5"/><g transform="rotate(-45 10.5 11)"><rect x="2.5" y="7.6" width="16" height="6.8" rx="3.4" fill="#dcdcdc"/><circle cx="8.8" cy="9.8" r=".8" fill="#535353"/><circle cx="12.2" cy="9.8" r=".8" fill="#535353"/><circle cx="8.8" cy="12.2" r=".8" fill="#535353"/><circle cx="12.2" cy="12.2" r=".8" fill="#535353"/></g></svg>
<svg style="position:absolute;left:113px;top:751.5px" width="4" height="4"><path d="M4,0 V4 H0Z" fill="#bdbdbd"/></svg>
<svg style="position:absolute;left:93px;top:762.5px" width="20" height="20" viewBox="0 0 20 20"><path d="M17.5,1.8 L9,10.5 L10.8,12.2 L18.2,2.6Z" fill="#dcdcdc"/><path d="M8.2,11.3 Q4.8,11.8 4.5,15 Q4.3,17 2.5,17.8 Q8,18.6 10,13Z" fill="#dcdcdc"/></svg>
<svg style="position:absolute;left:113px;top:777.5px" width="4" height="4"><path d="M4,0 V4 H0Z" fill="#bdbdbd"/></svg>
<svg style="position:absolute;left:93px;top:788.5px" width="20" height="20" viewBox="0 0 20 20"><path d="M8.2,10.5 Q8.8,7.5 7.6,5.8 Q6.8,2 10,2 Q13.2,2 12.4,5.8 Q11.2,7.5 11.8,10.5 H16 Q17,10.5 17,11.5 V13.5 H3 V11.5 Q3,10.5 4,10.5Z" fill="#dcdcdc"/><rect x="3" y="15" width="14" height="2.2" fill="#dcdcdc"/></svg>
<svg style="position:absolute;left:113px;top:803.5px" width="4" height="4"><path d="M4,0 V4 H0Z" fill="#bdbdbd"/></svg>
<svg style="position:absolute;left:93px;top:814.5px" width="20" height="20" viewBox="0 0 20 20"><path d="M18,2 L10,10 L11.6,11.6 L18.6,2.8Z" fill="#dcdcdc"/><path d="M9.2,10.8 Q6,11.3 5.8,14.3 Q5.6,16.3 4,17 Q9,17.8 11,12.5Z" fill="#dcdcdc"/><path d="M2,8 Q2.5,3.5 7,3 L6.5,1.5 L10,3.8 L6.8,6.2 L6.9,4.6 Q4,5 3.5,8Z" fill="#dcdcdc"/></svg>
<svg style="position:absolute;left:113px;top:829.5px" width="4" height="4"><path d="M4,0 V4 H0Z" fill="#bdbdbd"/></svg>
<svg style="position:absolute;left:93px;top:840.5px" width="20" height="20" viewBox="0 0 20 20"><path d="M2.5,12.5 L11,4 L16.5,9.5 L10.5,15.5 H5.5Z" fill="none" stroke="#dcdcdc" stroke-width="1.3" stroke-linejoin="round"/><path d="M7,8 L12.8,13.6 L16.5,9.5 L11,4Z" fill="#dcdcdc"/><path d="M5,17 H17" stroke="#dcdcdc" stroke-width="1.2"/></svg>
<svg style="position:absolute;left:113px;top:855.5px" width="4" height="4"><path d="M4,0 V4 H0Z" fill="#bdbdbd"/></svg>
<svg style="position:absolute;left:94.5px;top:870px" width="17" height="13"><defs><linearGradient id="tg"><stop offset="0" stop-color="#555"/><stop offset="1" stop-color="#f4f4f4"/></linearGradient></defs><rect x=".7" y=".7" width="15.6" height="11.6" fill="url(#tg)" stroke="#dcdcdc" stroke-width="1.3"/></svg>
<svg style="position:absolute;left:113px;top:881.5px" width="4" height="4"><path d="M4,0 V4 H0Z" fill="#bdbdbd"/></svg>
<svg style="position:absolute;left:93px;top:892.5px" width="20" height="20" viewBox="0 0 20 20"><path d="M10,2.5 Q15.2,9.5 15.2,12.8 A5.2,5.2 0 0 1 4.8,12.8 Q4.8,9.5 10,2.5Z" fill="#dcdcdc"/></svg>
<svg style="position:absolute;left:113px;top:907.5px" width="4" height="4"><path d="M4,0 V4 H0Z" fill="#bdbdbd"/></svg>
<svg style="position:absolute;left:93px;top:918.5px" width="20" height="20" viewBox="0 0 20 20"><path d="M13.5,2 L8.5,9 L10.2,10.2 L14.6,2.8Z" fill="#dcdcdc"/><path d="M8,9.8 Q5,10.2 4.8,13 Q4.6,14.8 3.2,15.5 Q8,16.5 9.6,11.4Z" fill="#dcdcdc"/><circle cx="14" cy="13.5" r="3" fill="none" stroke="#dcdcdc" stroke-width="1.3"/><path d="M12,15.5 L16,11.5" stroke="#dcdcdc" stroke-width="1.2"/></svg>
<svg style="position:absolute;left:113px;top:933.5px" width="4" height="4"><path d="M4,0 V4 H0Z" fill="#bdbdbd"/></svg>
<svg style="position:absolute;left:93px;top:944.5px" width="20" height="20" viewBox="0 0 20 20"><circle cx="12" cy="7.5" r="4.6" fill="#dcdcdc"/><path d="M8.6,10.8 L3,17" stroke="#dcdcdc" stroke-width="2" stroke-linecap="round"/></svg>
<svg style="position:absolute;left:113px;top:959.5px" width="4" height="4"><path d="M4,0 V4 H0Z" fill="#bdbdbd"/></svg>
<svg style="position:absolute;left:93px;top:970.5px" width="20" height="20" viewBox="0 0 20 20"><path d="M3,17 L5.2,9.2 L10.5,5 L15.5,10 L11,15 Z" fill="none" stroke="#dcdcdc" stroke-width="1.3" stroke-linejoin="round"/><path d="M3.2,16.8 L9,11" stroke="#dcdcdc" stroke-width="1.1"/><circle cx="9.6" cy="10.6" r="1.3" fill="#dcdcdc"/><path d="M10.5,3.6 L12.3,1.8 L18,7.6 L16.4,9.4Z" fill="#dcdcdc"/></svg>
<svg style="position:absolute;left:113px;top:985.5px" width="4" height="4"><path d="M4,0 V4 H0Z" fill="#bdbdbd"/></svg>
<div class="t" style="left:95px;top:996px;width:16px;height:20px;line-height:20px;font-size:19px;font-weight:700;color:#dcdcdc;font-family:'Liberation Serif',serif;text-align:center;">T</div>
<svg style="position:absolute;left:113px;top:1011.5px" width="4" height="4"><path d="M4,0 V4 H0Z" fill="#bdbdbd"/></svg>
<svg style="position:absolute;left:93px;top:1022.5px" width="20" height="20" viewBox="0 0 20 20"><path d="M6,2.5 V16 L9.4,12.6 L11.8,18 L14,17 L11.6,11.8 H16Z" fill="#111" stroke="#dcdcdc" stroke-width="1"/></svg>
<svg style="position:absolute;left:113px;top:1037.5px" width="4" height="4"><path d="M4,0 V4 H0Z" fill="#bdbdbd"/></svg>
<svg style="position:absolute;left:94.5px;top:1052px" width="17" height="13"><rect x=".7" y=".7" width="15.6" height="11.6" fill="#6f6f6f" stroke="#dcdcdc" stroke-width="1.3"/></svg>
<svg style="position:absolute;left:113px;top:1063.5px" width="4" height="4"><path d="M4,0 V4 H0Z" fill="#bdbdbd"/></svg>
<div style="position:absolute;left:87.5px;top:1072px;width:32px;height:24.5px;background:#3a3a3a;border-radius:3px;border:1px solid #5a5a5a;box-sizing:border-box;"></div>
<svg style="position:absolute;left:94.6px;top:1075.8px" width="17" height="17" viewBox="0 0 17 17"><path d="M0.6,8.6 Q0.2,7.6 1.4,7.6 Q2.2,7.6 3,8.4 L4.8,10 V3 Q4.8,2 5.7,2 Q6.6,2 6.6,3 V8 H7.8 V1 Q7.8,0 8.8,0 Q9.8,0 9.8,1 V8 H11 V2.2 Q11,1.2 11.9,1.2 Q12.8,1.2 12.8,2.2 V8.6 L13.8,9 L14.6,5 Q14.8,4.1 15.6,4.3 Q16.4,4.5 16.2,5.4 L15,12 Q14.2,16.8 9.5,16.8 Q6,16.8 4.3,13.2 Z" fill="#e8e8e8"/></svg>
<svg style="position:absolute;left:113px;top:1089.5px" width="4" height="4"><path d="M4,0 V4 H0Z" fill="#bdbdbd"/></svg>
<svg style="position:absolute;left:93px;top:1100.5px" width="20" height="20" viewBox="0 0 20 20"><circle cx="8.3" cy="8.3" r="5.2" fill="none" stroke="#dcdcdc" stroke-width="1.5"/><path d="M12.2,12.2 L17,17" stroke="#dcdcdc" stroke-width="2" stroke-linecap="round"/></svg>
<svg style="position:absolute;left:93px;top:1126.5px" width="20" height="20" viewBox="0 0 20 20"><circle cx="4" cy="10" r="2" fill="#dcdcdc"/><circle cx="10" cy="10" r="2" fill="#dcdcdc"/><circle cx="16" cy="10" r="2" fill="#dcdcdc"/></svg>
<svg style="position:absolute;left:113px;top:1141.5px" width="4" height="4"><path d="M4,0 V4 H0Z" fill="#bdbdbd"/></svg>
<svg style="position:absolute;left:87px;top:1154px" width="12" height="12"><rect x="4.5" y="4.5" width="6.5" height="6.5" fill="#fff" stroke="#000" stroke-width="1"/><rect x="1" y="1" width="7" height="7" fill="#000" stroke="#fff" stroke-width="1"/></svg>
<svg style="position:absolute;left:106px;top:1153px" width="13" height="13"><path d="M3.5,4 Q9,3.5 9,9.5" fill="none" stroke="#dcdcdc" stroke-width="1.6"/><path d="M4.5,1 L1,4.2 L4.5,7Z M6.2,8.5 L9,12.3 L11.8,8.5Z" fill="#dcdcdc"/></svg>
<div style="position:absolute;left:98.5px;top:1180.5px;width:19.5px;height:22px;background:#fff;border:1px solid #444;box-sizing:border-box;"></div>
<div style="position:absolute;left:88.5px;top:1170.5px;width:19.5px;height:19px;background:#000;border:1.5px solid #fff;box-shadow:0 0 0 .6px #3a3a3a;box-sizing:border-box;"></div>
<svg style="position:absolute;left:135px;top:590px" width="753" height="620" viewBox="135 590 753 620"><use href="#art" x="135" y="590" width="753" height="1000"/></svg>
</div></body></html>
